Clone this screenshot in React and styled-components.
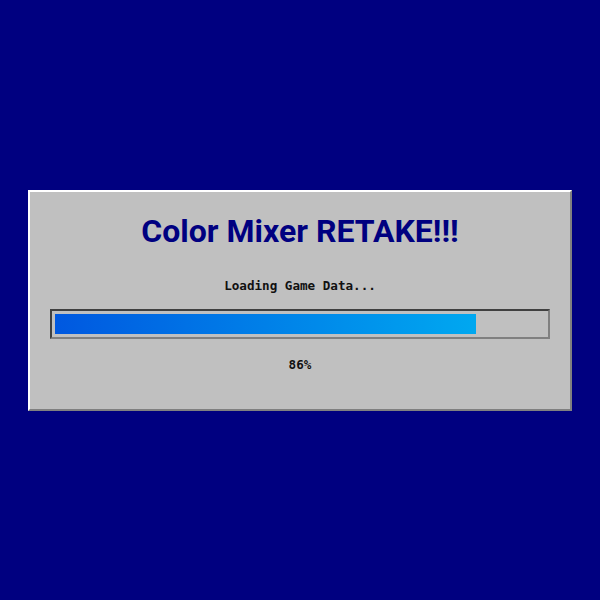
import React from 'react';
import styled, { createGlobalStyle } from 'styled-components';

const GlobalStyle = createGlobalStyle`
  html, body, #root {
    margin: 0;
    padding: 0;
    height: 100%;
  }
  body {
    background: #000080;
    font-family: "Liberation Sans", Arial, sans-serif;
  }
`;

const Screen = styled.div`
  height: 100%;
  display: flex;
  align-items: center;
  justify-content: center;
`;

const Panel = styled.div`
  width: 544px;
  box-sizing: border-box;
  background: #c0c0c0;
  border: 2px solid;
  border-color: #ffffff #808080 #808080 #ffffff;
  padding: 20px 20px 37px;
  display: flex;
  flex-direction: column;
  align-items: center;
`;

const Title = styled.h1`
  margin: 0 0 28px;
  font-family: Roboto, "Liberation Sans", sans-serif;
  font-weight: 700;
  font-size: 32px;
  color: #000080;
`;

const MonoText = styled.div`
  font-family: "DejaVu Sans Mono", monospace;
  font-size: 12.6px;
  font-weight: 700;
  color: #111;
  margin: ${p => p.$margin || 0};
`;

const Track = styled.div`
  align-self: stretch;
  height: 20px;
  padding: 3px;
  border: 2px solid;
  border-color: #404040 #808080 #808080 #404040;
  background: #c0c0c0;
`;

const Fill = styled.div`
  height: 100%;
  background: linear-gradient(90deg, #0058e0, #00a8f0);
`;

export default function App() {
  const progress = 86;
  return (
    <>
      <GlobalStyle />
      <Screen>
        <Panel>
          <Title>Color Mixer RETAKE!!!</Title>
          <MonoText $margin="0 0 16px">Loading Game Data...</MonoText>
          <Track>
            <Fill style={{ width: `${progress}%` }} />
          </Track>
          <MonoText $margin="18px 0 0">{progress}%</MonoText>
        </Panel>
      </Screen>
    </>
  );
}
